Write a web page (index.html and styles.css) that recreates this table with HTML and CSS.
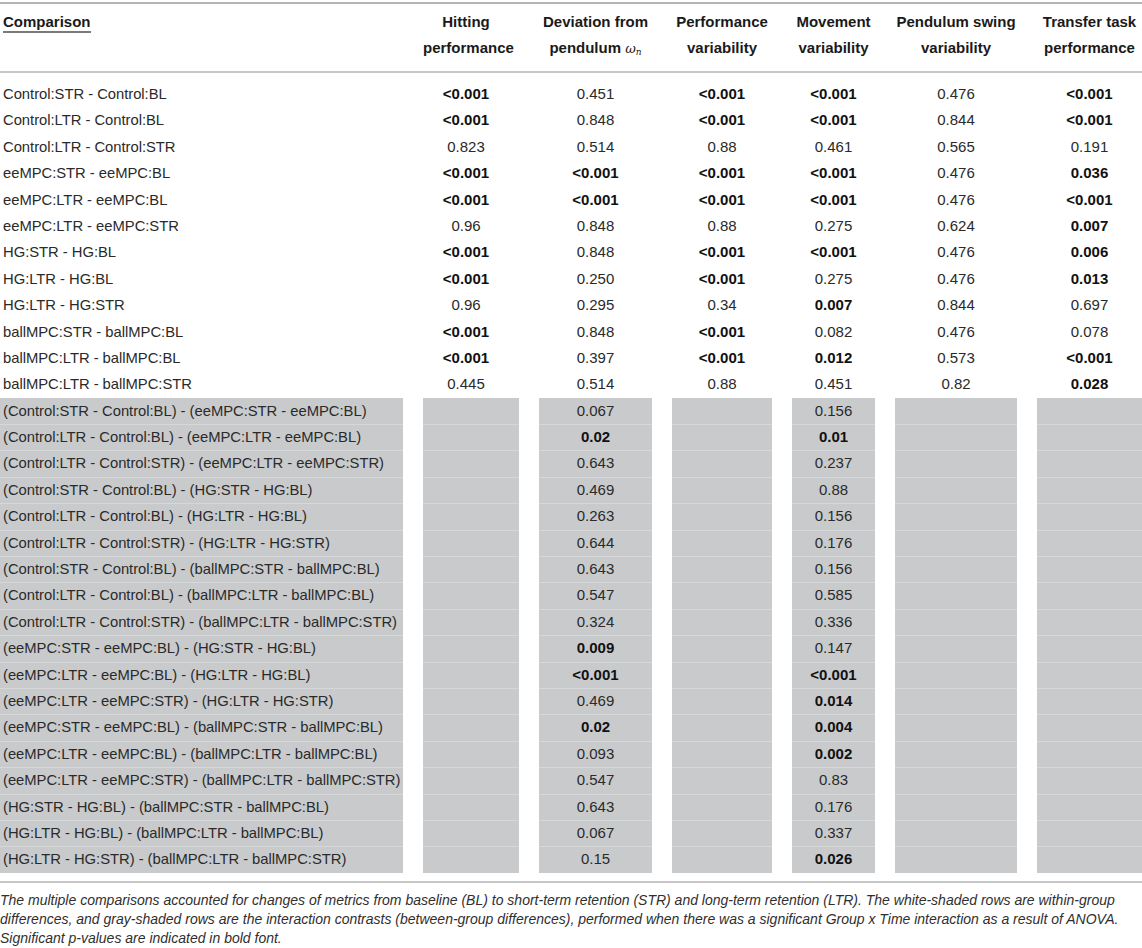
FILE: index.html
```html
<!DOCTYPE html>
<html lang="en">
<head>
<meta charset="utf-8">
<title>Multiple comparisons</title>
<link rel="stylesheet" href="styles.css">
</head>
<body>
<div class="rule rule-top"></div>
<div class="tbl head">
  <div class="hc first"><span class="ul">Comparison</span></div>
  <div class="hc">Hitting<br>performance</div>
  <div class="hc">Deviation from<br>pendulum <i class="omega">ω</i><sub class="sub">n</sub></div>
  <div class="hc">Performance<br>variability</div>
  <div class="hc">Movement<br>variability</div>
  <div class="hc">Pendulum swing<br>variability</div>
  <div class="hc">Transfer task<br>performance</div>
</div>
<div class="rule rule-mid"></div>
<div class="tbl body">
  <div class="c first">Control:STR - Control:BL</div><div class="c b">&lt;0.001</div><div class="c">0.451</div><div class="c b">&lt;0.001</div><div class="c b">&lt;0.001</div><div class="c">0.476</div><div class="c b">&lt;0.001</div>
  <div class="c first">Control:LTR - Control:BL</div><div class="c b">&lt;0.001</div><div class="c">0.848</div><div class="c b">&lt;0.001</div><div class="c b">&lt;0.001</div><div class="c">0.844</div><div class="c b">&lt;0.001</div>
  <div class="c first">Control:LTR - Control:STR</div><div class="c">0.823</div><div class="c">0.514</div><div class="c">0.88</div><div class="c">0.461</div><div class="c">0.565</div><div class="c">0.191</div>
  <div class="c first">eeMPC:STR - eeMPC:BL</div><div class="c b">&lt;0.001</div><div class="c b">&lt;0.001</div><div class="c b">&lt;0.001</div><div class="c b">&lt;0.001</div><div class="c">0.476</div><div class="c b">0.036</div>
  <div class="c first">eeMPC:LTR - eeMPC:BL</div><div class="c b">&lt;0.001</div><div class="c b">&lt;0.001</div><div class="c b">&lt;0.001</div><div class="c b">&lt;0.001</div><div class="c">0.476</div><div class="c b">&lt;0.001</div>
  <div class="c first">eeMPC:LTR - eeMPC:STR</div><div class="c">0.96</div><div class="c">0.848</div><div class="c">0.88</div><div class="c">0.275</div><div class="c">0.624</div><div class="c b">0.007</div>
  <div class="c first">HG:STR - HG:BL</div><div class="c b">&lt;0.001</div><div class="c">0.848</div><div class="c b">&lt;0.001</div><div class="c b">&lt;0.001</div><div class="c">0.476</div><div class="c b">0.006</div>
  <div class="c first">HG:LTR - HG:BL</div><div class="c b">&lt;0.001</div><div class="c">0.250</div><div class="c b">&lt;0.001</div><div class="c">0.275</div><div class="c">0.476</div><div class="c b">0.013</div>
  <div class="c first">HG:LTR - HG:STR</div><div class="c">0.96</div><div class="c">0.295</div><div class="c">0.34</div><div class="c b">0.007</div><div class="c">0.844</div><div class="c">0.697</div>
  <div class="c first">ballMPC:STR - ballMPC:BL</div><div class="c b">&lt;0.001</div><div class="c">0.848</div><div class="c b">&lt;0.001</div><div class="c">0.082</div><div class="c">0.476</div><div class="c">0.078</div>
  <div class="c first">ballMPC:LTR - ballMPC:BL</div><div class="c b">&lt;0.001</div><div class="c">0.397</div><div class="c b">&lt;0.001</div><div class="c b">0.012</div><div class="c">0.573</div><div class="c b">&lt;0.001</div>
  <div class="c first">ballMPC:LTR - ballMPC:STR</div><div class="c">0.445</div><div class="c">0.514</div><div class="c">0.88</div><div class="c">0.451</div><div class="c">0.82</div><div class="c b">0.028</div>

  <div class="c g first top">(Control:STR - Control:BL) - (eeMPC:STR - eeMPC:BL)</div><div class="c g top"></div><div class="c g top">0.067</div><div class="c g top"></div><div class="c g top">0.156</div><div class="c g top"></div><div class="c g top"></div>
  <div class="c g first">(Control:LTR - Control:BL) - (eeMPC:LTR - eeMPC:BL)</div><div class="c g"></div><div class="c g b">0.02</div><div class="c g"></div><div class="c g b">0.01</div><div class="c g"></div><div class="c g"></div>
  <div class="c g first">(Control:LTR - Control:STR) - (eeMPC:LTR - eeMPC:STR)</div><div class="c g"></div><div class="c g">0.643</div><div class="c g"></div><div class="c g">0.237</div><div class="c g"></div><div class="c g"></div>
  <div class="c g first">(Control:STR - Control:BL) - (HG:STR - HG:BL)</div><div class="c g"></div><div class="c g">0.469</div><div class="c g"></div><div class="c g">0.88</div><div class="c g"></div><div class="c g"></div>
  <div class="c g first">(Control:LTR - Control:BL) - (HG:LTR - HG:BL)</div><div class="c g"></div><div class="c g">0.263</div><div class="c g"></div><div class="c g">0.156</div><div class="c g"></div><div class="c g"></div>
  <div class="c g first">(Control:LTR - Control:STR) - (HG:LTR - HG:STR)</div><div class="c g"></div><div class="c g">0.644</div><div class="c g"></div><div class="c g">0.176</div><div class="c g"></div><div class="c g"></div>
  <div class="c g first">(Control:STR - Control:BL) - (ballMPC:STR - ballMPC:BL)</div><div class="c g"></div><div class="c g">0.643</div><div class="c g"></div><div class="c g">0.156</div><div class="c g"></div><div class="c g"></div>
  <div class="c g first">(Control:LTR - Control:BL) - (ballMPC:LTR - ballMPC:BL)</div><div class="c g"></div><div class="c g">0.547</div><div class="c g"></div><div class="c g">0.585</div><div class="c g"></div><div class="c g"></div>
  <div class="c g first">(Control:LTR - Control:STR) - (ballMPC:LTR - ballMPC:STR)</div><div class="c g"></div><div class="c g">0.324</div><div class="c g"></div><div class="c g">0.336</div><div class="c g"></div><div class="c g"></div>
  <div class="c g first">(eeMPC:STR - eeMPC:BL) - (HG:STR - HG:BL)</div><div class="c g"></div><div class="c g b">0.009</div><div class="c g"></div><div class="c g">0.147</div><div class="c g"></div><div class="c g"></div>
  <div class="c g first">(eeMPC:LTR - eeMPC:BL) - (HG:LTR - HG:BL)</div><div class="c g"></div><div class="c g b">&lt;0.001</div><div class="c g"></div><div class="c g b">&lt;0.001</div><div class="c g"></div><div class="c g"></div>
  <div class="c g first">(eeMPC:LTR - eeMPC:STR) - (HG:LTR - HG:STR)</div><div class="c g"></div><div class="c g">0.469</div><div class="c g"></div><div class="c g b">0.014</div><div class="c g"></div><div class="c g"></div>
  <div class="c g first">(eeMPC:STR - eeMPC:BL) - (ballMPC:STR - ballMPC:BL)</div><div class="c g"></div><div class="c g b">0.02</div><div class="c g"></div><div class="c g b">0.004</div><div class="c g"></div><div class="c g"></div>
  <div class="c g first">(eeMPC:LTR - eeMPC:BL) - (ballMPC:LTR - ballMPC:BL)</div><div class="c g"></div><div class="c g">0.093</div><div class="c g"></div><div class="c g b">0.002</div><div class="c g"></div><div class="c g"></div>
  <div class="c g first">(eeMPC:LTR - eeMPC:STR) - (ballMPC:LTR - ballMPC:STR)</div><div class="c g"></div><div class="c g">0.547</div><div class="c g"></div><div class="c g">0.83</div><div class="c g"></div><div class="c g"></div>
  <div class="c g first">(HG:STR - HG:BL) - (ballMPC:STR - ballMPC:BL)</div><div class="c g"></div><div class="c g">0.643</div><div class="c g"></div><div class="c g">0.176</div><div class="c g"></div><div class="c g"></div>
  <div class="c g first">(HG:LTR - HG:BL) - (ballMPC:LTR - ballMPC:BL)</div><div class="c g"></div><div class="c g">0.067</div><div class="c g"></div><div class="c g">0.337</div><div class="c g"></div><div class="c g"></div>
  <div class="c g first">(HG:LTR - HG:STR) - (ballMPC:LTR - ballMPC:STR)</div><div class="c g"></div><div class="c g">0.15</div><div class="c g"></div><div class="c g b">0.026</div><div class="c g"></div><div class="c g"></div>
</div>
<div class="rule rule-bot"></div>
<p class="note">The multiple comparisons accounted for changes of metrics from baseline (BL) to short-term retention (STR) and long-term retention (LTR). The white-shaded rows are within-group differences, and gray-shaded rows are the interaction contrasts (between-group differences), performed when there was a significant Group x Time interaction as a result of ANOVA. Significant p-values are indicated in bold font.</p>
</body>
</html>
```
FILE: styles.css
```css
html, body {
  margin: 0;
  padding: 0;
  background: #ffffff;
}

body {
  font-family: "Liberation Sans", Arial, Helvetica, sans-serif;
  font-size: 15px;
  color: #2a2a2a;
  width: 1142px;
}

.rule {
  height: 2px;
  background: #bdbdbd;
}

.rule-top {
  margin-top: 2px;
  background: #b5b5b5;
}

.rule-mid {
  height: 2px;
  background: #c6c6c6;
}

.rule-bot {
  margin-top: 8px;
  height: 2px;
  background: #c6c6c6;
}

.tbl {
  display: grid;
  grid-template-columns: 403px 96px 113px 100px 83px 122px 105px;
  column-gap: 20px;
}

.head {
  padding: 5px 0 9px;
}

.hc {
  font-weight: bold;
  color: #1a1a1a;
  text-align: center;
  line-height: 26px;
}

.hc.first {
  text-align: left;
  padding-left: 3px;
}

.hc:nth-child(2) {
  padding-right: 10px;
}

.ul {
  display: inline-block;
  line-height: 19px;
  border-bottom: 2px solid #7a7a7a;
}

.omega {
  font-family: "DejaVu Serif", "Liberation Serif", serif;
  font-weight: normal;
  font-size: 13px;
}

.sub {
  font-family: "DejaVu Serif", "Liberation Serif", serif;
  font-style: italic;
  font-weight: normal;
  font-size: 9px;
  vertical-align: -2px;
  line-height: 0;
}

.body {
  padding-top: 8px;
}

.c {
  height: 26.4px;
  line-height: 26.4px;
  text-align: center;
  white-space: nowrap;
}

.c:nth-child(7n+2) {
  padding-right: 10px;
}

.c.first {
  text-align: left;
  padding-left: 3px;
  font-size: 14.8px;
  letter-spacing: -0.03px;
}

.b {
  font-weight: bold;
  color: #111111;
}

.g {
  background: #c9cacc;
  box-shadow: inset 0 1px 0 #d6d7d9;
}

.g.top {
  box-shadow: none;
}

.note {
  margin: 8px 0 0;
  font-style: italic;
  font-size: 14px;
  line-height: 19px;
  color: #2f2f2f;
}
```
